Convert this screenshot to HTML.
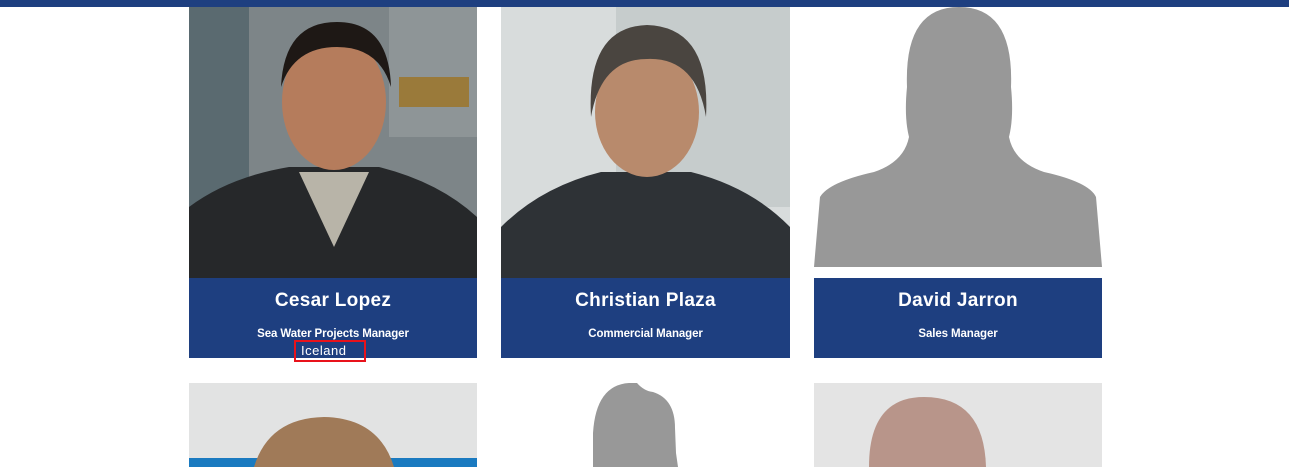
<!DOCTYPE html>
<html><head><meta charset="utf-8"><style>
*{margin:0;padding:0;box-sizing:border-box}
body{width:1289px;height:467px;background:#fff;position:relative;overflow:hidden;font-family:"Liberation Sans",sans-serif}
.top{position:absolute;left:0;top:0;width:1289px;height:7px;background:#1e3f80}
.ph{position:absolute;overflow:hidden}
.cap{position:absolute;height:80px;background:#1e3f80;color:#fff;text-align:center}
.cap h3{font-size:19px;font-weight:bold;margin-top:12px;letter-spacing:.3px}
.cap p{font-size:11.5px;font-weight:bold;margin-top:16px;letter-spacing:-.1px}
.ice{position:absolute;left:294px;top:340px;width:72px;height:22px;border:2px solid #e8121b;color:#fff;font-size:13px;padding-left:5px;line-height:17px;letter-spacing:.5px}
</style></head><body>
<div class="top"></div>

<div class="ph" style="left:189px;top:7px;width:288px;height:271px">
<svg width="288" height="271">
<rect width="288" height="271" fill="#7d8588"/>
<rect x="0" y="0" width="60" height="271" fill="#5a6a70"/>
<rect x="200" y="0" width="88" height="130" fill="#8e9597"/>
<rect x="210" y="70" width="70" height="30" fill="#9a7a3a"/>
<path d="M0 271 L0 200 Q40 170 100 160 L190 160 Q250 175 288 210 L288 271Z" fill="#26282a"/>
<path d="M110 165 L145 240 L180 165Z" fill="#b8b4a8"/>
<ellipse cx="145" cy="95" rx="52" ry="68" fill="#b57c5c"/>
<path d="M92 80 Q95 15 148 15 Q200 15 202 80 Q190 40 148 40 Q105 40 92 80Z" fill="#1e1815"/>
</svg></div>
<div class="cap" style="left:189px;top:278px;width:288px"><h3>Cesar Lopez</h3><p>Sea Water Projects Manager</p></div>
<div class="ice">Iceland</div>

<div class="ph" style="left:501px;top:7px;width:289px;height:271px">
<svg width="289" height="271">
<rect width="289" height="271" fill="#d8dcdc"/>
<rect x="115" y="0" width="174" height="200" fill="#c6cccc"/>
<path d="M0 271 L0 220 Q40 180 100 165 L190 165 Q250 180 289 220 L289 271Z" fill="#2e3236"/>
<ellipse cx="146" cy="105" rx="52" ry="65" fill="#b88a6c"/>
<path d="M90 110 Q85 20 146 18 Q210 20 205 110 Q195 50 146 52 Q100 52 90 110Z" fill="#4a4540"/>
</svg></div>
<div class="cap" style="left:501px;top:278px;width:289px"><h3>Christian Plaza</h3><p>Commercial Manager</p></div>

<div class="ph" style="left:814px;top:7px;width:288px;height:271px">
<svg width="288" height="260">
<path d="M0 260 L6 190 Q15 175 60 165 Q90 155 95 130 Q90 110 93 80 Q90 0 145 0 Q200 0 197 80 Q200 110 195 130 Q200 155 230 165 Q275 175 282 190 L288 260Z" fill="#989898"/>
</svg></div>
<div class="cap" style="left:814px;top:278px;width:288px"><h3>David Jarron</h3><p>Sales Manager</p></div>

<div class="ph" style="left:189px;top:383px;width:288px;height:84px">
<svg width="288" height="84">
<rect width="288" height="84" fill="#e2e3e3"/>
<rect y="75" width="288" height="9" fill="#1a7ac0"/>
<path d="M65 84 Q80 35 135 34 Q190 35 205 84Z" fill="#a07a58"/>
</svg></div>

<div class="ph" style="left:501px;top:383px;width:289px;height:84px">
<svg width="289" height="84">
<path d="M92 84 L92 50 Q95 2 128 0 L136 0 Q143 8 152 9 Q174 16 174 45 L175 70 L177 84Z" fill="#989898"/>
</svg></div>

<div class="ph" style="left:814px;top:383px;width:288px;height:84px">
<svg width="288" height="84">
<rect width="288" height="84" fill="#e4e4e4"/>
<path d="M55 84 Q55 14 110 14 Q170 14 172 84Z" fill="#b8958a"/>
</svg></div>
</body></html>
